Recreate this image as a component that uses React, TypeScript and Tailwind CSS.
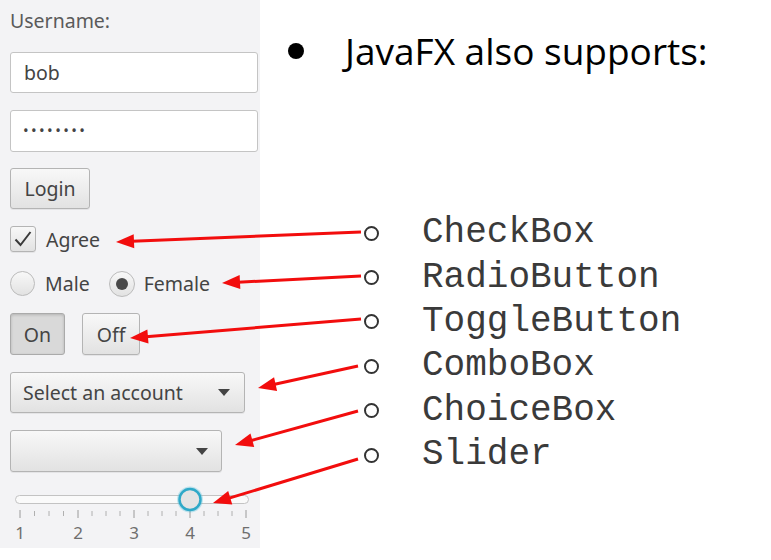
import React from 'react'

const UI_FONT = { fontFamily: '"Noto Sans", "Open Sans", sans-serif' }

const ITEMS = ['CheckBox', 'RadioButton', 'ToggleButton', 'ComboBox', 'ChoiceBox', 'Slider']

// from [x,y] -> tip [x,y]
const ARROWS: [number, number, number, number][] = [
  [361, 232, 116, 242],
  [361, 276, 222, 283],
  [361, 319, 130, 338],
  [358, 366, 258, 388],
  [358, 411, 235, 445],
  [358, 459, 213, 503],
]

function arrowHead(x1: number, y1: number, x2: number, y2: number) {
  const dx = x2 - x1
  const dy = y2 - y1
  const len = Math.hypot(dx, dy)
  const ux = dx / len
  const uy = dy / len
  const L = 18
  const W = 7
  const bx = x2 - ux * L
  const by = y2 - uy * L
  return {
    pts: `${x2},${y2} ${bx - uy * W},${by + ux * W} ${bx + uy * W},${by - ux * W}`,
    bx: x2 - ux * (L - 2),
    by: y2 - uy * (L - 2),
  }
}

function Arrows() {
  return (
    <svg className="absolute inset-0 pointer-events-none" width={771} height={560}>
      {ARROWS.map(([x1, y1, x2, y2], i) => {
        const h = arrowHead(x1, y1, x2, y2)
        return (
          <g key={i}>
            <line x1={x1} y1={y1} x2={h.bx} y2={h.by} stroke="#f20d0d" strokeWidth={3} />
            <polygon points={h.pts} fill="#f20d0d" />
          </g>
        )
      })}
    </svg>
  )
}

function Slider() {
  const xs = [20, 78, 134, 190, 246]
  const minor: number[] = []
  for (let i = 0; i < 4; i++) {
    for (let k = 1; k < 4; k++) minor.push(xs[i] + ((xs[i + 1] - xs[i]) * k) / 4)
  }
  return (
    <div className="relative w-[250px] h-[66px] mt-[10px]">
      <svg width={250} height={66} className="absolute inset-0">
        <rect x={5.5} y={13.5} width={233} height={8} rx={4} fill="#fafafa" stroke="#c3c3c3" />
        {xs.map(x => (
          <line key={x} x1={x - 10} x2={x - 10} y1={28} y2={36} stroke="#9a9a9a" />
        ))}
        {minor.map(x => (
          <line key={x} x1={x - 10} x2={x - 10} y1={29} y2={34} stroke="#b0b0b0" />
        ))}
        <circle cx={180} cy={17.5} r={13} fill="#3fb8d6" opacity={0.3} />
        <circle cx={180} cy={17.5} r={10.5} fill="#e4e4e4" stroke="#2fa9c8" strokeWidth={2.5} />
      </svg>
      <div className="absolute top-[40px] left-0 w-full text-[17px] leading-[22px] text-[#6e6e6e]" style={UI_FONT}>
        {xs.map((x, i) => (
          <span key={x} className="absolute -translate-x-1/2" style={{ left: x - 10 }}>
            {i + 1}
          </span>
        ))}
      </div>
    </div>
  )
}

function Panel() {
  const btn =
    'border border-[#b4b4b4] rounded-[3px] bg-gradient-to-b from-[#f8f8f8] to-[#e2e2e2] text-[#444] shadow-[0_1px_0_rgba(0,0,0,0.06)]'
  return (
    <div className="w-[260px] h-[548px] bg-[#f3f3f5] pl-[10px] pr-[2px] flex flex-col text-[19.5px] text-[#444]" style={UI_FONT}>
      <div className="h-[52px] pt-[6px] text-[19.5px] text-[#5a5a5a]">Username:</div>
      <div className="h-[41px] w-[248px] bg-white border border-[#c4c4c4] rounded-[3px] flex items-center pl-[13px] text-[#444]">
        bob
      </div>
      <div className="h-[42px] w-[248px] mt-[17px] bg-white border border-[#c4c4c4] rounded-[3px] flex items-center pl-[12px] text-[15px] tracking-[2.4px] text-[#444]">
        ••••••••
      </div>
      <div className={`${btn} h-[42px] w-[80px] mt-[16px] flex items-center justify-center`}>Login</div>

      <div className="flex items-center gap-[10px] mt-[17px] h-[26px]">
        <div className={`${btn} w-[26px] h-[26px] flex items-center justify-center`}>
          <svg width="20" height="18" viewBox="0 0 20 18">
            <path d="M2.5 9.5 L7.5 15 L17.5 2" fill="none" stroke="#3a3a3a" strokeWidth="2" />
          </svg>
        </div>
        <span>Agree</span>
      </div>

      <div className="flex items-center mt-[19px] h-[25px]">
        <div className="w-[25px] h-[25px] rounded-full border border-[#bbb] bg-gradient-to-b from-[#f8f8f8] to-[#e2e2e2]" />
        <span className="ml-[10px]">Male</span>
        <div className="ml-[19px] w-[26px] h-[26px] rounded-full border border-[#bbb] bg-gradient-to-b from-[#f8f8f8] to-[#e2e2e2] flex items-center justify-center">
          <div className="w-[12px] h-[12px] rounded-full bg-[#4a4a4a]" />
        </div>
        <span className="ml-[9px]">Female</span>
      </div>

      <div className="flex mt-[17px] gap-[17px] h-[42px]">
        <div className="h-[42px] w-[55px] border border-[#aaa] rounded-[3px] bg-[#d9d9d9] shadow-[inset_0_1px_3px_rgba(0,0,0,0.18)] flex items-center justify-center text-[#444]">
          On
        </div>
        <div className={`${btn} h-[42px] w-[58px] flex items-center justify-center`}>Off</div>
      </div>

      <div className={`${btn} mt-[17px] h-[41px] w-[235px] flex items-center pl-[12px] pr-[14px]`}>
        <span className="flex-1">Select an account</span>
        <svg width="12" height="7" viewBox="0 0 12 7"><path d="M0 0 H12 L6 7 Z" fill="#444" /></svg>
      </div>

      <div className={`${btn} mt-[17px] h-[42px] w-[212px] flex items-center justify-end pr-[13px]`}>
        <svg width="12" height="7" viewBox="0 0 12 7"><path d="M0 0 H12 L6 7 Z" fill="#444" /></svg>
      </div>

      <Slider />
    </div>
  )
}

export default function App() {
  return (
    <div className="relative w-[771px] h-[560px] bg-white flex overflow-hidden">
      <Panel />
      <div className="flex flex-col pt-[26px]">
        <div className="flex items-center h-[50px]">
          <span className="ml-[28px] w-[16px] h-[16px] rounded-full bg-black" />
          <span className="ml-[41px] text-[37px] leading-[50px] text-black" style={{ fontFamily: '"Open Sans", sans-serif' }}>
            JavaFX also supports:
          </span>
        </div>
        <div className="mt-[135px] flex flex-col">
          {ITEMS.map(it => (
            <div key={it} className="flex items-center h-[44.4px]">
              <span className="ml-[104px] w-[15px] h-[15px] rounded-full border-2 border-[#333]" />
              <span
                className="ml-[43px] text-[36px] leading-none text-[#3a3a3a]"
                style={{ fontFamily: '"Liberation Mono", monospace' }}
              >
                {it}
              </span>
            </div>
          ))}
        </div>
      </div>
      <Arrows />
    </div>
  )
}
